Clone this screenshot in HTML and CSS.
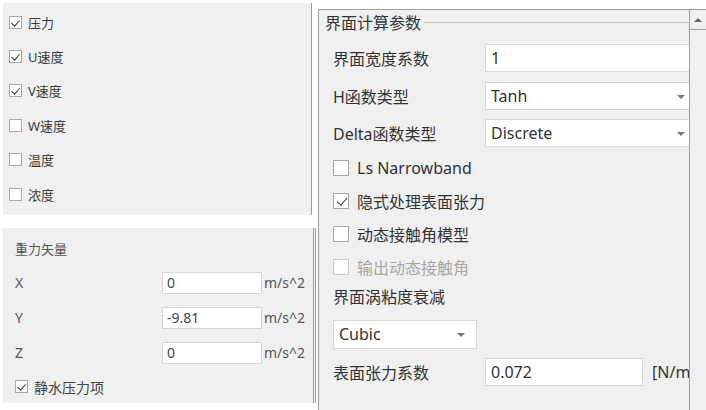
FILE: index.html
```html
<!DOCTYPE html>
<html>
<head>
<meta charset="utf-8">
<link rel="stylesheet" href="styles.css">
</head>
<body>
<div class="app">
  <div class="left">
    <div class="box box-top">
      <div class="lrow"><span class="cb checked"></span><span>压力</span></div>
      <div class="lrow"><span class="cb checked"></span><span>U速度</span></div>
      <div class="lrow"><span class="cb checked"></span><span>V速度</span></div>
      <div class="lrow"><span class="cb"></span><span>W速度</span></div>
      <div class="lrow"><span class="cb"></span><span>温度</span></div>
      <div class="lrow"><span class="cb"></span><span>浓度</span></div>
    </div>
    <div class="box box-bottom">
      <div class="gtitle">重力矢量</div>
      <div class="vrow"><span class="vlabel">X</span><span class="vinput">0</span><span class="unit">m/s^2</span></div>
      <div class="vrow"><span class="vlabel">Y</span><span class="vinput">-9.81</span><span class="unit">m/s^2</span></div>
      <div class="vrow"><span class="vlabel">Z</span><span class="vinput">0</span><span class="unit">m/s^2</span></div>
      <div class="vrow cbrow"><span class="cb checked"></span><span>静水压力项</span></div>
    </div>
  </div>
  <div class="right">
    <div class="content">
      <div class="rtitle"><span>界面计算参数</span><span class="rline"></span></div>
      <div class="frow r1"><span class="flabel">界面宽度系数</span><span class="field">1</span></div>
      <div class="frow r2"><span class="flabel">H函数类型</span><span class="field combo">Tanh<span class="arrow"></span></span></div>
      <div class="frow r3"><span class="flabel">Delta函数类型</span><span class="field combo">Discrete<span class="arrow"></span></span></div>
      <div class="crow"><span class="cb big"></span><span>Ls Narrowband</span></div>
      <div class="crow"><span class="cb big checked"></span><span>隐式处理表面张力</span></div>
      <div class="crow"><span class="cb big"></span><span>动态接触角模型</span></div>
      <div class="crow disabled"><span class="cb big"></span><span>输出动态接触角</span></div>
      <div class="plabel">界面涡粘度衰减</div>
      <div class="cubic combo">Cubic<span class="arrow"></span></div>
      <div class="frow r4"><span class="flabel">表面张力系数</span><span class="field short">0.072</span><span class="runit">[N/m</span></div>
    </div>
    <div class="scrollbar">
      <div class="sbtn"><span class="uparrow"></span></div>
    </div>
  </div>
</div>
</body>
</html>
```

FILE: styles.css
```css
* { box-sizing: border-box; }
html, body { margin: 0; padding: 0; background: #fff; }
body { width: 706px; height: 410px; overflow: hidden; font-family: "Noto Sans", "Noto Sans CJK SC", sans-serif; color: #333; }
.app { display: flex; width: 706px; height: 410px; }

.left { flex: none; width: 316px; padding-left: 3px; display: flex; flex-direction: column; }
.box { background: #f0f0f0; }
.box-top { margin-top: 3px; height: 212px; width: 309px; border-right: 1px solid #9a9a9a; padding-top: 2px; }
.lrow { height: 34.4px; display: flex; align-items: center; padding-left: 6px; font-size: 13px; color: #3a3a3a; }
.lrow .cb { margin-right: 6px; }

.cb { width: 13px; height: 13px; border: 1px solid #a8a8a8; background: #fff; display: inline-block; flex: none; position: relative; }
.cb.checked::after { content: ""; position: absolute; left: 3px; top: 1px; width: 4px; height: 7px; border: solid #333; border-width: 0 1.6px 1.6px 0; transform: rotate(40deg); }
.cb.big { width: 16px; height: 16px; }
.cb.big.checked::after { left: 4.5px; top: 1.5px; width: 5px; height: 9px; }

.box-bottom { margin-top: 13px; height: 175px; width: 313px; border-right: 3px double #a0a0a0; padding: 10px 0 0 12px; color: #555; font-size: 14px; }
.gtitle { height: 22px; line-height: 22px; font-size: 13px; margin-bottom: 5px; }
.vrow { height: 35px; display: flex; align-items: center; }
.vlabel { width: 147px; }
.vinput { width: 100px; height: 22px; background: #fff; border: 1px solid #d6d6d6; padding-left: 4px; line-height: 20px; font-size: 14px; color: #444; }
.unit { margin-left: 2px; }
.cbrow { height: 33px; font-size: 14px; color: #444; }
.cbrow .cb { margin-right: 6px; }

.right { min-width: 0; margin-left: 2px; margin-top: 9px; flex: 1; display: flex; border-left: 1px solid #a0a0a0; border-top: 1px solid #a0a0a0; background: #f0f0f0; }
.content { flex: 1; min-width: 0; overflow: hidden; padding-left: 6px; font-size: 16px; color: #333; }
.rtitle { height: 24px; display: flex; align-items: center; white-space: nowrap; }
.rline { flex: 1; height: 1px; background: #c6c6c6; margin-left: 3px; }
.frow { display: flex; align-items: center; padding-left: 8px; height: 28px; white-space: nowrap; }
.r1 { margin-top: 10px; }
.r2 { margin-top: 10px; }
.r3 { margin-top: 9px; }
.flabel { width: 152px; flex: none; }
.field { flex: none; width: 216px; height: 28px; background: #fff; border: 1px solid #d8d8d8; padding-left: 5px; line-height: 26px; position: relative; }
.combo { position: relative; }
.arrow { position: absolute; right: 11px; top: 12px; width: 0; height: 0; border-left: 4px solid transparent; border-right: 4px solid transparent; border-top: 4px solid #777; }
.field.combo .arrow { right: 15px; }
.crow { height: 33px; display: flex; align-items: center; padding-left: 8px; }
.r3 + .crow { margin-top: 4px; }
.crow .cb { margin-right: 8px; }
.crow.disabled { color: #a6a6a6; }
.crow.disabled .cb { border-color: #c8c8c8; }
.plabel { height: 26px; line-height: 26px; padding-left: 8px; margin-top: 1px; }
.cubic { margin: 10px 0 0 8px; width: 144px; height: 29px; background: #fff; border: 1px solid #d8d8d8; padding-left: 5px; line-height: 27px; }
.r4 { margin-top: 9px; }
.field.short { width: 158px; }
.runit { margin-left: 9px; }

.scrollbar { width: 17px; flex: none; border-left: 1px solid #a0a0a0; background: #f0f0f0; }
.sbtn { height: 20px; border-bottom: 1px solid #a0a0a0; display: flex; align-items: center; justify-content: center; }
.uparrow { width: 0; height: 0; border-left: 4px solid transparent; border-right: 4px solid transparent; border-bottom: 4px solid #666; }
```
